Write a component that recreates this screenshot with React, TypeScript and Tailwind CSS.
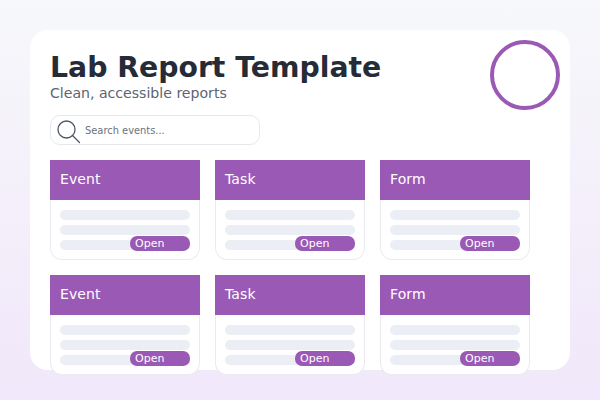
const cards = ["Event", "Task", "Form", "Event", "Task", "Form"];

function Card({ label }: { label: string }) {
  return (
    <div className="relative h-[100px] w-[150px] rounded-b-xl border border-t-0 border-[#e9ebf0] bg-white">
      <div className="-mx-px flex h-[40px] items-center bg-[#9b59b6] px-[10px] pb-[2px] text-[14px] tracking-[0.1px] text-white">
        {label}
      </div>
      <div className="flex flex-col gap-[5px] px-[9px] pt-[10px]">
        <div className="h-[10px] rounded-full bg-[#ebeef5]" />
        <div className="h-[10px] rounded-full bg-[#ebeef5]" />
        <div className="h-[10px] rounded-full bg-[#ebeef5]" />
      </div>
      <div className="absolute right-[9px] top-[76px] flex h-[15px] w-[60px] items-center rounded-[7px] bg-[#9b59b6] pl-[5px] text-[11px] leading-none text-white">
        Open
      </div>
    </div>
  );
}

export default function App() {
  return (
    <div
      className="h-[400px] w-[600px] overflow-hidden bg-gradient-to-b from-[#f7f8fb] to-[#f1e7fa] p-[30px] text-[#252b37]"
      style={{ fontFamily: '"DejaVu Sans", sans-serif' }}
    >
      <div className="relative h-[340px] rounded-[18px] bg-white px-[20px] pt-[21px]">
        <div className="absolute right-[10px] top-[10px] h-[70px] w-[70px] rounded-full border-4 border-[#9b59b6]" />
        <h1 className="text-[28.3px] font-bold leading-[34px]">Lab Report Template</h1>
        <p className="-mt-[2px] text-[14.1px] leading-[20px] text-[#5b6472]">Clean, accessible reports</p>
        <div className="mt-[12px] flex h-[30px] w-[210px] items-center rounded-[10px] border border-[#e6e8ee] bg-white pl-[5px]">
          <svg width="26" height="26" viewBox="0 0 26 26" fill="none" stroke="#4a5568" strokeWidth="1.3" className="mt-[4px] shrink-0">
            <circle cx="10.5" cy="10.5" r="8.5" />
            <path d="M16.5 16.5 L23.5 23.5" strokeLinecap="round" />
          </svg>
          <span className="ml-[3px] pt-[2px] text-[9.9px] text-[#6b7280]">Search events...</span>
        </div>
        <div className="mt-[15px] grid w-[480px] grid-cols-[150px_150px_150px] gap-x-[15px] gap-y-[15px]">
          {cards.map((c, i) => (
            <Card key={i} label={c} />
          ))}
        </div>
      </div>
    </div>
  );
}
